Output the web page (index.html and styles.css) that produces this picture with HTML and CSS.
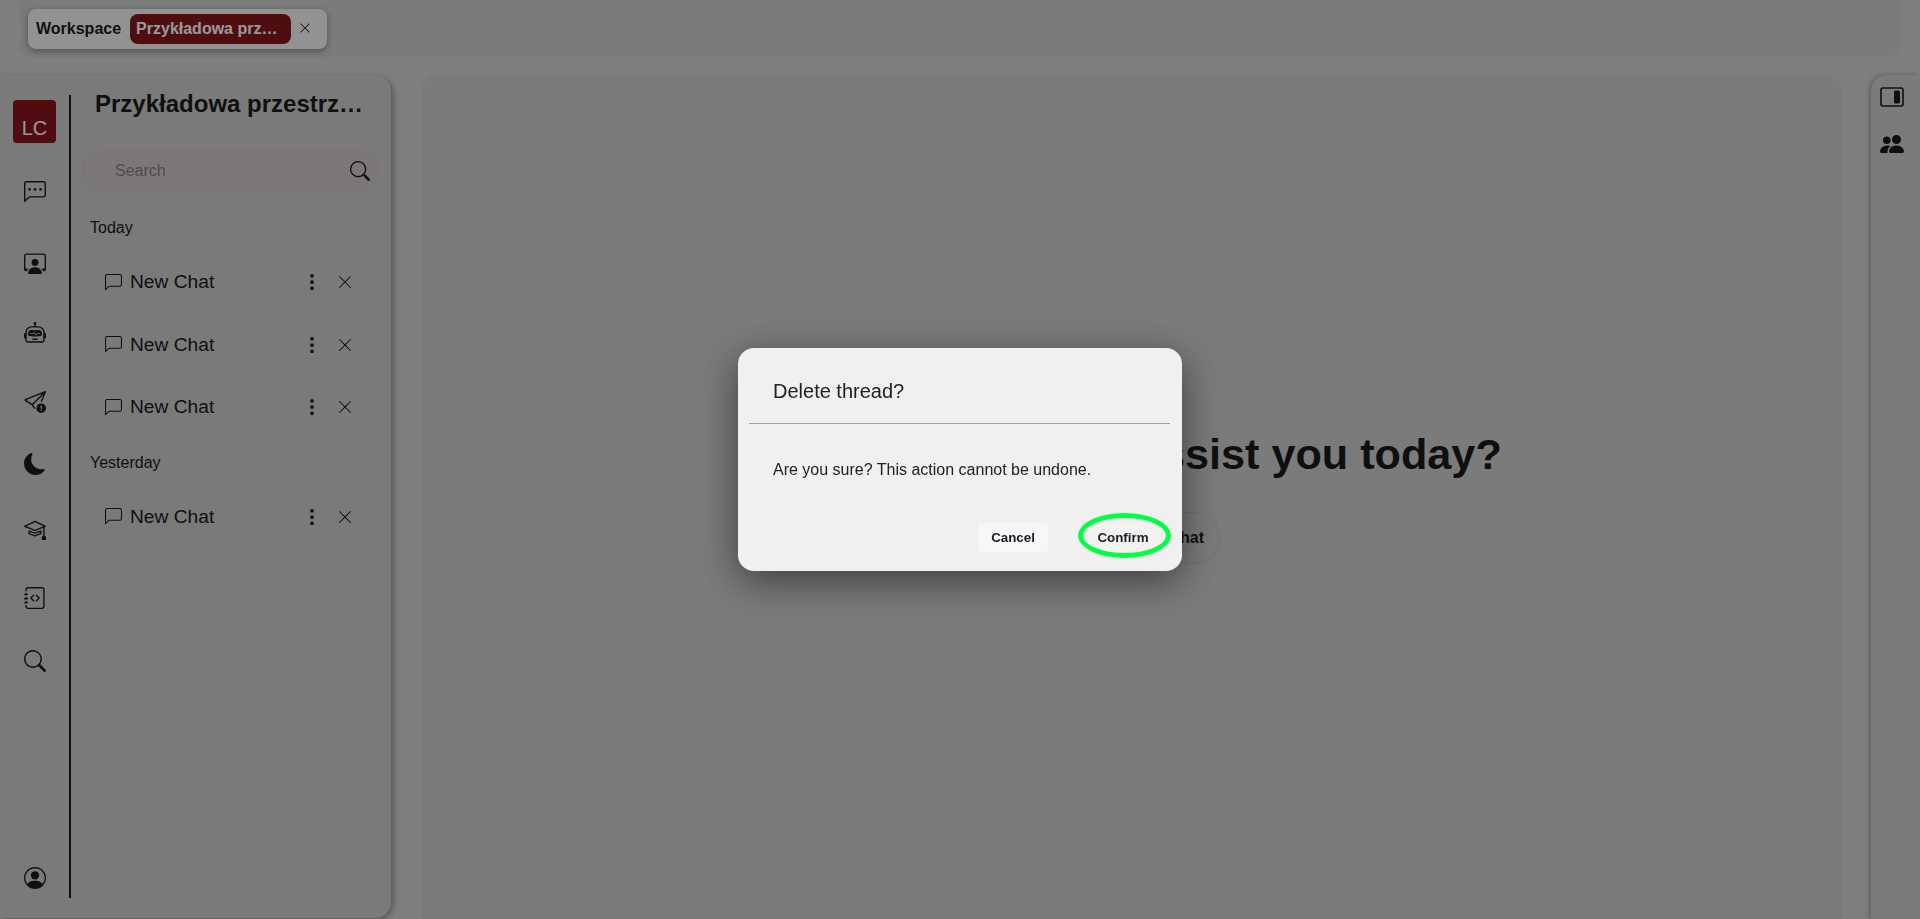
FILE: index.html
```html
<!DOCTYPE html>
<html lang="en">

<head>
    <meta charset="UTF-8">
    <meta name="viewport" content="width=device-width, initial-scale=1.0">
    <title>Chat</title>
    <link rel="stylesheet" href="styles.css">
</head>

<body>
    <div class="topbar">
        <div class="tab">
            <span class="tab-label">Workspace</span>
            <span class="tab-pill">Przykładowa prz…</span>
            <svg class="tab-close" viewBox="0 0 16 16" fill="currentColor"><path d="M2.146 2.854a.5.5 0 1 1 .708-.708L8 7.293l5.146-5.147a.5.5 0 0 1 .708.708L8.707 8l5.147 5.146a.5.5 0 0 1-.708.708L8 8.707l-5.146 5.147a.5.5 0 0 1-.708-.708L7.293 8 2.146 2.854Z"/></svg>
        </div>
    </div>

    <div class="panels">
        <aside class="sidebar">
            <nav class="rail">
                <div class="avatar">LC</div>
                <svg class="rail-icon m-38" viewBox="0 0 16 16" fill="currentColor"><path d="M14 1a1 1 0 0 1 1 1v8a1 1 0 0 1-1 1H4.414A2 2 0 0 0 3 11.586l-2 2V2a1 1 0 0 1 1-1h12zM2 0a2 2 0 0 0-2 2v12.793a.5.5 0 0 0 .854.353l2.853-2.853A1 1 0 0 1 4.414 12H14a2 2 0 0 0 2-2V2a2 2 0 0 0-2-2H2z"/><path d="M5 6a1 1 0 1 1-2 0 1 1 0 0 1 2 0zm4 0a1 1 0 1 1-2 0 1 1 0 0 1 2 0zm4 0a1 1 0 1 1-2 0 1 1 0 0 1 2 0z"/></svg>
                <svg class="rail-icon m-49" viewBox="0 0 16 16" fill="currentColor"><path d="M4 16s-1 0-1-1 1-4 5-4 5 3 5 4-1 1-1 1H4Zm4-5.95a2.5 2.5 0 1 0 0-5 2.5 2.5 0 0 0 0 5Z"/><path d="M2 1a2 2 0 0 0-2 2v9.5A1.5 1.5 0 0 0 1.5 14h.653a5.373 5.373 0 0 1 1.066-2H1V3a1 1 0 0 1 1-1h12a1 1 0 0 1 1 1v9h-2.219c.554.654.89 1.373 1.066 2h.653a1.5 1.5 0 0 0 1.5-1.5V3a2 2 0 0 0-2-2H2Z"/></svg>
                <svg class="rail-icon m-48" viewBox="0 0 16 16" fill="currentColor"><path d="M6 12.5a.5.5 0 0 1 .5-.5h3a.5.5 0 0 1 0 1h-3a.5.5 0 0 1-.5-.5ZM3 8.062C3 6.76 4.235 5.765 5.53 5.886a26.58 26.58 0 0 0 4.94 0C11.765 5.765 13 6.76 13 8.062v1.157a.933.933 0 0 1-.765.935c-.845.147-2.34.346-4.235.346-1.895 0-3.39-.2-4.235-.346A.933.933 0 0 1 3 9.219V8.062Zm4.542-.827a.25.25 0 0 0-.217.068l-.92.9a24.767 24.767 0 0 1-1.871-.183.25.25 0 0 0-.068.495c.55.076 1.232.149 2.02.193a.25.25 0 0 0 .189-.071l.754-.736.847 1.71a.25.25 0 0 0 .404.062l.932-.97a25.286 25.286 0 0 0 1.922-.188.25.25 0 0 0-.068-.495c-.538.074-1.207.145-1.98.189a.25.25 0 0 0-.166.076l-.754.785-.842-1.7a.25.25 0 0 0-.182-.135Z"/><path d="M8.5 1.866a1 1 0 1 0-1 0V3h-2A4.5 4.5 0 0 0 1 7.5V8a1 1 0 0 0-1 1v2a1 1 0 0 0 1 1v1a2 2 0 0 0 2 2h10a2 2 0 0 0 2-2v-1a1 1 0 0 0 1-1V9a1 1 0 0 0-1-1v-.5A4.5 4.5 0 0 0 10.5 3h-2V1.866ZM14 7.5V13a1 1 0 0 1-1 1H3a1 1 0 0 1-1-1V7.5A3.5 3.5 0 0 1 5.5 4h5A3.5 3.5 0 0 1 14 7.5Z"/></svg>
                <svg class="rail-icon m-47" viewBox="0 0 16 16" fill="currentColor"><path d="M15.964.686a.5.5 0 0 0-.65-.65L.767 5.855a.75.75 0 0 0-.124 1.329l4.995 3.178 1.531 2.406a.5.5 0 0 0 .844-.536L6.637 10.07l7.494-7.494-1.895 4.738a.5.5 0 1 0 .928.372l2.8-7Zm-2.54 1.183L5.93 9.363 1.591 6.602l11.833-4.733Z"/><path d="M12.5 16a3.5 3.5 0 1 0 0-7 3.5 3.5 0 0 0 0 7Zm.5-5v1.5a.5.5 0 0 1-1 0V11a.5.5 0 0 1 1 0Zm0 3a.5.5 0 1 1-1 0 .5.5 0 0 1 1 0Z"/></svg>
                <svg class="rail-icon m-40" viewBox="0 0 16 16" fill="currentColor"><path d="M6 .278a.768.768 0 0 1 .08.858 7.208 7.208 0 0 0-.878 3.46c0 4.021 3.278 7.277 7.318 7.277.527 0 1.04-.055 1.533-.16a.787.787 0 0 1 .81.316.733.733 0 0 1-.031.893A8.349 8.349 0 0 1 8.344 16C3.734 16 0 12.286 0 7.71 0 4.266 2.114 1.312 5.124.06A.752.752 0 0 1 6 .278z"/></svg>
                <svg class="rail-icon m-43" viewBox="0 0 16 16" fill="currentColor"><path d="M8.211 2.047a.5.5 0 0 0-.422 0l-7.5 3.5a.5.5 0 0 0 .025.917l7.5 3a.5.5 0 0 0 .372 0L14 7.14V13a1 1 0 0 0-1 1v2h3v-2a1 1 0 0 0-1-1V6.739l.686-.275a.5.5 0 0 0 .025-.917l-7.5-3.5ZM8 8.46 1.758 5.965 8 3.052l6.242 2.913L8 8.46Z"/><path d="M4.176 9.032a.5.5 0 0 0-.656.327l-.5 1.7a.5.5 0 0 0 .294.605l4.5 1.8a.5.5 0 0 0 .372 0l4.5-1.8a.5.5 0 0 0 .294-.605l-.5-1.7a.5.5 0 0 0-.656-.327L8 10.466 4.176 9.032Zm-.068 1.873.22-.748 3.496 1.311a.5.5 0 0 0 .352 0l3.496-1.311.22.748L8 12.46l-3.892-1.556Z"/></svg>
                <svg class="rail-icon m-47" viewBox="0 0 16 16" fill="currentColor"><path d="M8.646 5.646a.5.5 0 0 1 .708 0l2 2a.5.5 0 0 1 0 .708l-2 2a.5.5 0 0 1-.708-.708L10.293 8 8.646 6.354a.5.5 0 0 1 0-.708zm-1.292 0a.5.5 0 0 0-.708 0l-2 2a.5.5 0 0 0 0 .708l2 2a.5.5 0 0 0 .708-.708L5.707 8l1.647-1.646a.5.5 0 0 0 0-.708z"/><path d="M3 0h10a2 2 0 0 1 2 2v12a2 2 0 0 1-2 2H3a2 2 0 0 1-2-2v-1h1v1a1 1 0 0 0 1 1h10a1 1 0 0 0 1-1V2a1 1 0 0 0-1-1H3a1 1 0 0 0-1 1v1H1V2a2 2 0 0 1 2-2z"/><path d="M1 5v-.5a.5.5 0 0 1 1 0V5h.5a.5.5 0 0 1 0 1h-2a.5.5 0 0 1 0-1H1zm0 3v-.5a.5.5 0 0 1 1 0V8h.5a.5.5 0 0 1 0 1h-2a.5.5 0 0 1 0-1H1zm0 3v-.5a.5.5 0 0 1 1 0v.5h.5a.5.5 0 0 1 0 1h-2a.5.5 0 0 1 0-1H1z"/></svg>
                <svg class="rail-icon m-41" viewBox="0 0 16 16" fill="currentColor"><path d="M11.742 10.344a6.5 6.5 0 1 0-1.397 1.398h-.001c.03.04.062.078.098.115l3.85 3.85a1 1 0 0 0 1.415-1.414l-3.85-3.85a1.007 1.007 0 0 0-.115-.1zM12 6.5a5.5 5.5 0 1 1-11 0 5.5 5.5 0 0 1 11 0z"/></svg>
                <svg class="rail-icon rail-bottom" viewBox="0 0 16 16" fill="currentColor"><path d="M11 6a3 3 0 1 1-6 0 3 3 0 0 1 6 0z"/><path d="M0 8a8 8 0 1 1 16 0A8 8 0 0 1 0 8zm8-7a7 7 0 0 0-5.468 11.37C3.242 11.226 4.805 10 8 10s4.757 1.225 5.468 2.37A7 7 0 0 0 8 1z"/></svg>
            </nav>

            <div class="threads">
                <h2 class="threads-title">Przykładowa przestrzeń robocza</h2>
                <div class="search">
                    <input type="text" placeholder="Search">
                    <svg viewBox="0 0 16 16" fill="currentColor"><path d="M11.742 10.344a6.5 6.5 0 1 0-1.397 1.398h-.001c.03.04.062.078.098.115l3.85 3.85a1 1 0 0 0 1.415-1.414l-3.85-3.85a1.007 1.007 0 0 0-.115-.1zM12 6.5a5.5 5.5 0 1 1-11 0 5.5 5.5 0 0 1 11 0z"/></svg>
                </div>

                <p class="day today">Today</p>
                <div class="thread first">
                    <svg class="thread-chat" viewBox="0 0 16 16" fill="currentColor"><path d="M14 1a1 1 0 0 1 1 1v8a1 1 0 0 1-1 1H4.414A2 2 0 0 0 3 11.586l-2 2V2a1 1 0 0 1 1-1h12zM2 0a2 2 0 0 0-2 2v12.793a.5.5 0 0 0 .854.353l2.853-2.853A1 1 0 0 1 4.414 12H14a2 2 0 0 0 2-2V2a2 2 0 0 0-2-2H2z"/></svg>
                    <span>New Chat</span>
                    <svg class="thread-more" viewBox="0 0 16 16" fill="currentColor"><path d="M9.5 13a1.5 1.5 0 1 1-3 0 1.5 1.5 0 0 1 3 0zm0-5a1.5 1.5 0 1 1-3 0 1.5 1.5 0 0 1 3 0zm0-5a1.5 1.5 0 1 1-3 0 1.5 1.5 0 0 1 3 0z"/></svg>
                    <svg class="thread-del" viewBox="0 0 16 16" fill="currentColor"><path d="M2.146 2.854a.5.5 0 1 1 .708-.708L8 7.293l5.146-5.147a.5.5 0 0 1 .708.708L8.707 8l5.147 5.146a.5.5 0 0 1-.708.708L8 8.707l-5.146 5.147a.5.5 0 0 1-.708-.708L7.293 8 2.146 2.854Z"/></svg>
                </div>
                <div class="thread">
                    <svg class="thread-chat" viewBox="0 0 16 16" fill="currentColor"><path d="M14 1a1 1 0 0 1 1 1v8a1 1 0 0 1-1 1H4.414A2 2 0 0 0 3 11.586l-2 2V2a1 1 0 0 1 1-1h12zM2 0a2 2 0 0 0-2 2v12.793a.5.5 0 0 0 .854.353l2.853-2.853A1 1 0 0 1 4.414 12H14a2 2 0 0 0 2-2V2a2 2 0 0 0-2-2H2z"/></svg>
                    <span>New Chat</span>
                    <svg class="thread-more" viewBox="0 0 16 16" fill="currentColor"><path d="M9.5 13a1.5 1.5 0 1 1-3 0 1.5 1.5 0 0 1 3 0zm0-5a1.5 1.5 0 1 1-3 0 1.5 1.5 0 0 1 3 0zm0-5a1.5 1.5 0 1 1-3 0 1.5 1.5 0 0 1 3 0z"/></svg>
                    <svg class="thread-del" viewBox="0 0 16 16" fill="currentColor"><path d="M2.146 2.854a.5.5 0 1 1 .708-.708L8 7.293l5.146-5.147a.5.5 0 0 1 .708.708L8.707 8l5.147 5.146a.5.5 0 0 1-.708.708L8 8.707l-5.146 5.147a.5.5 0 0 1-.708-.708L7.293 8 2.146 2.854Z"/></svg>
                </div>
                <div class="thread">
                    <svg class="thread-chat" viewBox="0 0 16 16" fill="currentColor"><path d="M14 1a1 1 0 0 1 1 1v8a1 1 0 0 1-1 1H4.414A2 2 0 0 0 3 11.586l-2 2V2a1 1 0 0 1 1-1h12zM2 0a2 2 0 0 0-2 2v12.793a.5.5 0 0 0 .854.353l2.853-2.853A1 1 0 0 1 4.414 12H14a2 2 0 0 0 2-2V2a2 2 0 0 0-2-2H2z"/></svg>
                    <span>New Chat</span>
                    <svg class="thread-more" viewBox="0 0 16 16" fill="currentColor"><path d="M9.5 13a1.5 1.5 0 1 1-3 0 1.5 1.5 0 0 1 3 0zm0-5a1.5 1.5 0 1 1-3 0 1.5 1.5 0 0 1 3 0zm0-5a1.5 1.5 0 1 1-3 0 1.5 1.5 0 0 1 3 0z"/></svg>
                    <svg class="thread-del" viewBox="0 0 16 16" fill="currentColor"><path d="M2.146 2.854a.5.5 0 1 1 .708-.708L8 7.293l5.146-5.147a.5.5 0 0 1 .708.708L8.707 8l5.147 5.146a.5.5 0 0 1-.708.708L8 8.707l-5.146 5.147a.5.5 0 0 1-.708-.708L7.293 8 2.146 2.854Z"/></svg>
                </div>

                <p class="day yesterday">Yesterday</p>
                <div class="thread first-yesterday">
                    <svg class="thread-chat" viewBox="0 0 16 16" fill="currentColor"><path d="M14 1a1 1 0 0 1 1 1v8a1 1 0 0 1-1 1H4.414A2 2 0 0 0 3 11.586l-2 2V2a1 1 0 0 1 1-1h12zM2 0a2 2 0 0 0-2 2v12.793a.5.5 0 0 0 .854.353l2.853-2.853A1 1 0 0 1 4.414 12H14a2 2 0 0 0 2-2V2a2 2 0 0 0-2-2H2z"/></svg>
                    <span>New Chat</span>
                    <svg class="thread-more" viewBox="0 0 16 16" fill="currentColor"><path d="M9.5 13a1.5 1.5 0 1 1-3 0 1.5 1.5 0 0 1 3 0zm0-5a1.5 1.5 0 1 1-3 0 1.5 1.5 0 0 1 3 0zm0-5a1.5 1.5 0 1 1-3 0 1.5 1.5 0 0 1 3 0z"/></svg>
                    <svg class="thread-del" viewBox="0 0 16 16" fill="currentColor"><path d="M2.146 2.854a.5.5 0 1 1 .708-.708L8 7.293l5.146-5.147a.5.5 0 0 1 .708.708L8.707 8l5.147 5.146a.5.5 0 0 1-.708.708L8 8.707l-5.146 5.147a.5.5 0 0 1-.708-.708L7.293 8 2.146 2.854Z"/></svg>
                </div>
            </div>
        </aside>

        <main class="chat">
            <h1>Hi there! How can I assist you today?</h1>
            <button class="new-chat">New Chat</button>
        </main>

        <aside class="right-bar">
            <svg class="right-panel-icon" viewBox="0 0 24 20"><rect x="1" y="1" width="22" height="18" rx="2" fill="none" stroke="currentColor" stroke-width="1.6"/><rect x="14" y="3.5" width="6" height="13" rx="1.5" fill="currentColor"/></svg>
            <svg class="right-people-icon" viewBox="0 0 16 16" fill="currentColor"><path d="M7 14s-1 0-1-1 1-4 5-4 5 3 5 4-1 1-1 1H7Zm4-6a3 3 0 1 0 0-6 3 3 0 0 0 0 6Zm-5.784 6A2.238 2.238 0 0 1 5 13c0-1.355.68-2.75 1.936-3.72A6.325 6.325 0 0 0 5 9c-4 0-5 3-5 4s1 1 1 1h4.216ZM4.5 8a2.5 2.5 0 1 0 0-5 2.5 2.5 0 0 0 0 5Z"/></svg>
        </aside>
    </div>

    <!-- Delete dialog -->
    <div class="overlay">
        <div class="modal">
            <div class="modal-title">Delete thread?</div>
            <p class="modal-text">Are you sure? This action cannot be undone.</p>
            <div class="modal-actions">
                <button class="modal-btn cancel">Cancel</button>
                <button class="modal-btn confirm">Confirm<span class="ring"></span></button>
            </div>
        </div>
    </div>
</body>

</html>
```

FILE: styles.css
```css
* {
    box-sizing: border-box;
}

body {
    margin: 0;
    height: 100vh;
    overflow: hidden;
    background-color: #d4d4d4;
    color: #1a1a1a;
    font-family: "Liberation Sans", Arial, sans-serif;
}

/* Top bar */
.topbar {
    height: 57px;
    margin: 0 20px;
    padding: 9px 8px;
    background-color: #cdcdcd;
    border-radius: 0 0 10px 10px;
}

.tab {
    display: flex;
    align-items: center;
    width: 299px;
    height: 40px;
    padding-left: 8px;
    background-color: #f3f3f3;
    border-radius: 8px;
    box-shadow: 0 2px 6px rgba(0, 0, 0, 0.35);
}

.tab-label {
    font-size: 16px;
    font-weight: bold;
}

.tab-pill {
    width: 161px;
    height: 30px;
    margin-left: 9px;
    padding-left: 6px;
    background-color: #84161b;
    border-radius: 8px;
    color: #fff;
    font-size: 16px;
    font-weight: bold;
    line-height: 30px;
}

.tab-close {
    width: 12px;
    height: 12px;
    margin-left: 8px;
    margin-top: -2px;
}

/* Panels */
.panels {
    display: flex;
    gap: 30px;
    height: 844px;
    margin-top: 18px;
}

.sidebar {
    display: flex;
    width: 391px;
    height: 843px;
    padding: 20px 0;
    background-color: #cbcbcb;
    border-radius: 0 16px 16px 0;
    box-shadow: 2px 2px 6px rgba(0, 0, 0, 0.35);
}

.rail {
    display: flex;
    flex-direction: column;
    align-items: center;
    width: 71px;
    padding: 5px 0 9px;
    border-right: 2px solid #1a1a1a;
}

.avatar {
    display: flex;
    align-items: flex-end;
    justify-content: center;
    width: 43px;
    height: 43px;
    padding-bottom: 3px;
    background-color: #84161b;
    border-radius: 4px;
    color: #fff;
    font-size: 20px;
}

.rail-icon {
    flex: none;
    width: 22px;
    height: 22px;
}

.m-38 { margin-top: 38px; }
.m-40 { margin-top: 40px; }
.m-41 { margin-top: 41px; }
.m-43 { margin-top: 43px; }
.m-47 { margin-top: 47px; }
.m-48 { margin-top: 48px; }
.m-49 { margin-top: 49px; }

.rail-bottom {
    margin-top: auto;
}

.threads {
    flex: 1;
    min-width: 0;
    margin-top: -5px;
    padding: 0 12px 0 11px;
}

.threads-title {
    width: 286px;
    margin: 0;
    padding-left: 13px;
    overflow: hidden;
    font-size: 24px;
    line-height: 28px;
    text-overflow: ellipsis;
    white-space: nowrap;
}

.search {
    display: flex;
    align-items: center;
    height: 40px;
    margin-top: 33px;
    padding: 0 8px 0 32px;
    background-color: #cfc7c9;
    border: 1px solid #c8c2c4;
    border-radius: 20px;
}

.search input {
    flex: 1;
    min-width: 0;
    padding: 0;
    background: transparent;
    border: none;
    outline: none;
    font-family: inherit;
    font-size: 16px;
}

.search input::placeholder {
    color: #808080;
}

.search svg {
    width: 20px;
    height: 20px;
}

.day {
    margin: 0 0 0 8px;
    font-size: 16px;
    line-height: 18px;
}

.today {
    margin-top: 28px;
}

.yesterday {
    margin-top: 15px;
}

.thread {
    display: flex;
    align-items: center;
    height: 62.5px;
    padding: 0 26px 0 23px;
    font-size: 19.2px;
}

.thread.first {
    margin-top: 14px;
}

.thread.first-yesterday {
    margin-top: 14px;
}

.thread-chat {
    width: 17px;
    height: 17px;
    margin-right: 8px;
}

.thread-more {
    width: 20px;
    height: 20px;
    margin-left: auto;
}

.thread-del {
    width: 16px;
    height: 16px;
    margin-left: 15px;
}

/* Main area */
.chat {
    display: flex;
    flex: 1;
    flex-direction: column;
    align-items: center;
    padding-top: 354px;
    background-color: #cdcdcd;
    border-radius: 16px 16px 0 0;
}

.chat h1 {
    margin: 0;
    padding-right: 24px;
    font-size: 43.2px;
    line-height: 50px;
    white-space: nowrap;
}

.new-chat {
    width: 178px;
    height: 52px;
    margin-top: 33px;
    padding: 0 15px 0 0;
    background: transparent;
    border: 1px solid #c0c0c0;
    border-radius: 26px;
    color: #1a1a1a;
    font-family: inherit;
    font-size: 16px;
    font-weight: bold;
    text-align: right;
}

.right-bar {
    display: flex;
    flex-direction: column;
    align-items: center;
    width: 49px;
    padding: 12px 8px 0 0;
    background-color: #cdcdcd;
    border-radius: 16px 0 0 0;
    box-shadow: -2px 0 5px rgba(0, 0, 0, 0.25);
}

.right-panel-icon {
    width: 24px;
    height: 20px;
}

.right-people-icon {
    width: 24px;
    height: 24px;
    margin-top: 25px;
}

/* Modal */
.overlay {
    position: fixed;
    top: 0;
    left: 0;
    z-index: 10;
    display: flex;
    align-items: center;
    justify-content: center;
    width: 100%;
    height: 100%;
    background-color: rgba(0, 0, 0, 0.4);
}

.modal {
    width: 444px;
    height: 223px;
    padding: 0 12px 0 11px;
    background-color: #f1f0ee;
    border-radius: 16px;
    box-shadow: 0 10px 40px rgba(0, 0, 0, 0.5);
    color: #212121;
}

.modal-title {
    height: 76px;
    padding: 32px 0 0 24px;
    border-bottom: 1px solid #a0a0a0;
    font-size: 20px;
    line-height: 23px;
}

.modal-text {
    margin: 37px 0 0 24px;
    font-size: 16px;
    line-height: 18px;
}

.modal-actions {
    display: flex;
    gap: 40px;
    justify-content: flex-end;
    margin-top: 44px;
    padding-right: 12px;
}

.modal-btn {
    position: relative;
    width: 70px;
    height: 29px;
    padding: 0;
    border: none;
    border-radius: 4px;
    color: #1a1a2a;
    font-family: inherit;
    font-size: 13.33px;
    font-weight: bold;
}

.cancel {
    background-color: #f7f7f7;
}

.confirm {
    background-color: #f3f2f0;
}

/* Green ring round the confirm button */
.ring {
    position: absolute;
    top: -10px;
    right: -13px;
    bottom: -6px;
    left: -10px;
    border: 5px solid #00ff44;
    border-radius: 50%;
}
```
